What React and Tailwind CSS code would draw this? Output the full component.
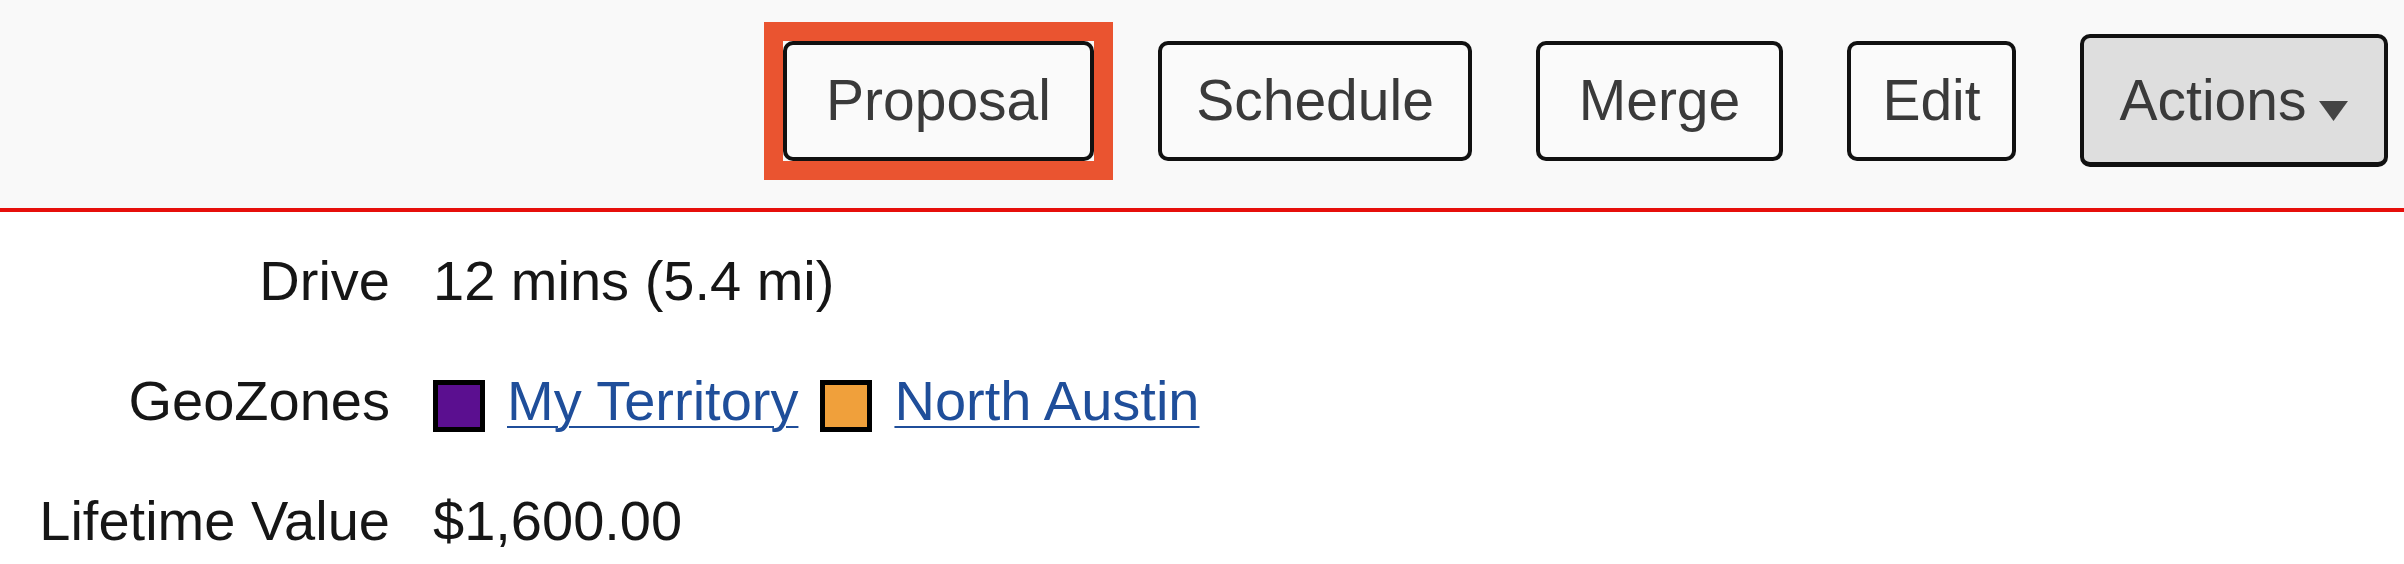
import React from 'react';

const font = { fontFamily: '"Liberation Sans", Arial, sans-serif' };

function Btn({ w, children, active }) {
  return (
    <button
      className={`flex items-center justify-center rounded-[10px] border-[4px] border-[#111] text-[57px] leading-none text-[#3a3a3a] ${
        active ? 'h-[133px] bg-[#dedede] border-b-[5px]' : 'h-[120px] bg-[#fafafa]'
      } ${w}`}
    >
      {children}
    </button>
  );
}

export default function App() {
  return (
    <div className="w-[2404px] h-[564px] bg-white overflow-hidden" style={font}>
      {/* toolbar */}
      <div className="h-[212px] bg-[#f9f9f9] border-b-[4px] border-[#e60f0b] flex items-center justify-end gap-[64px] pr-[16px] pb-[7px]">
        <div className="relative">
          <Btn w="w-[311px]">Proposal</Btn>
          <span className="pointer-events-none absolute -inset-[19px] border-[19px] border-[#ea5430]" />
        </div>
        <Btn w="w-[314px]">Schedule</Btn>
        <Btn w="w-[247px]">Merge</Btn>
        <Btn w="w-[169px]">Edit</Btn>
        <Btn w="w-[308px]" active>
          <span>Actions</span>
          <svg width="29" height="20" viewBox="0 0 29 20" className="ml-[13px] mt-[22px]">
            <path d="M0 0 H29 L14.5 20 Z" fill="#444" />
          </svg>
        </Btn>
      </div>

      {/* details */}
      <div className="pt-[9px] grid grid-cols-[390px_1fr] gap-x-[43px] text-[56px] leading-[120px] text-[#161616]">
        <div className="text-right">Drive</div>
        <div>12 mins (5.4 mi)</div>

        <div className="text-right">GeoZones</div>
        <div className="flex items-center gap-[22px]">
          <span className="mt-[10px] w-[52px] h-[52px] border-[5px] border-black bg-[#5b0f90]" />
          <a href="#" className="text-[#1f4e9a] underline decoration-2 underline-offset-[6px]">My Territory</a>
          <span className="mt-[10px] w-[52px] h-[52px] border-[5px] border-black bg-[#f0a03b]" />
          <a href="#" className="text-[#1f4e9a] underline decoration-2 underline-offset-[6px]">North Austin</a>
        </div>

        <div className="text-right">Lifetime Value</div>
        <div>$1,600.00</div>
      </div>
    </div>
  );
}
